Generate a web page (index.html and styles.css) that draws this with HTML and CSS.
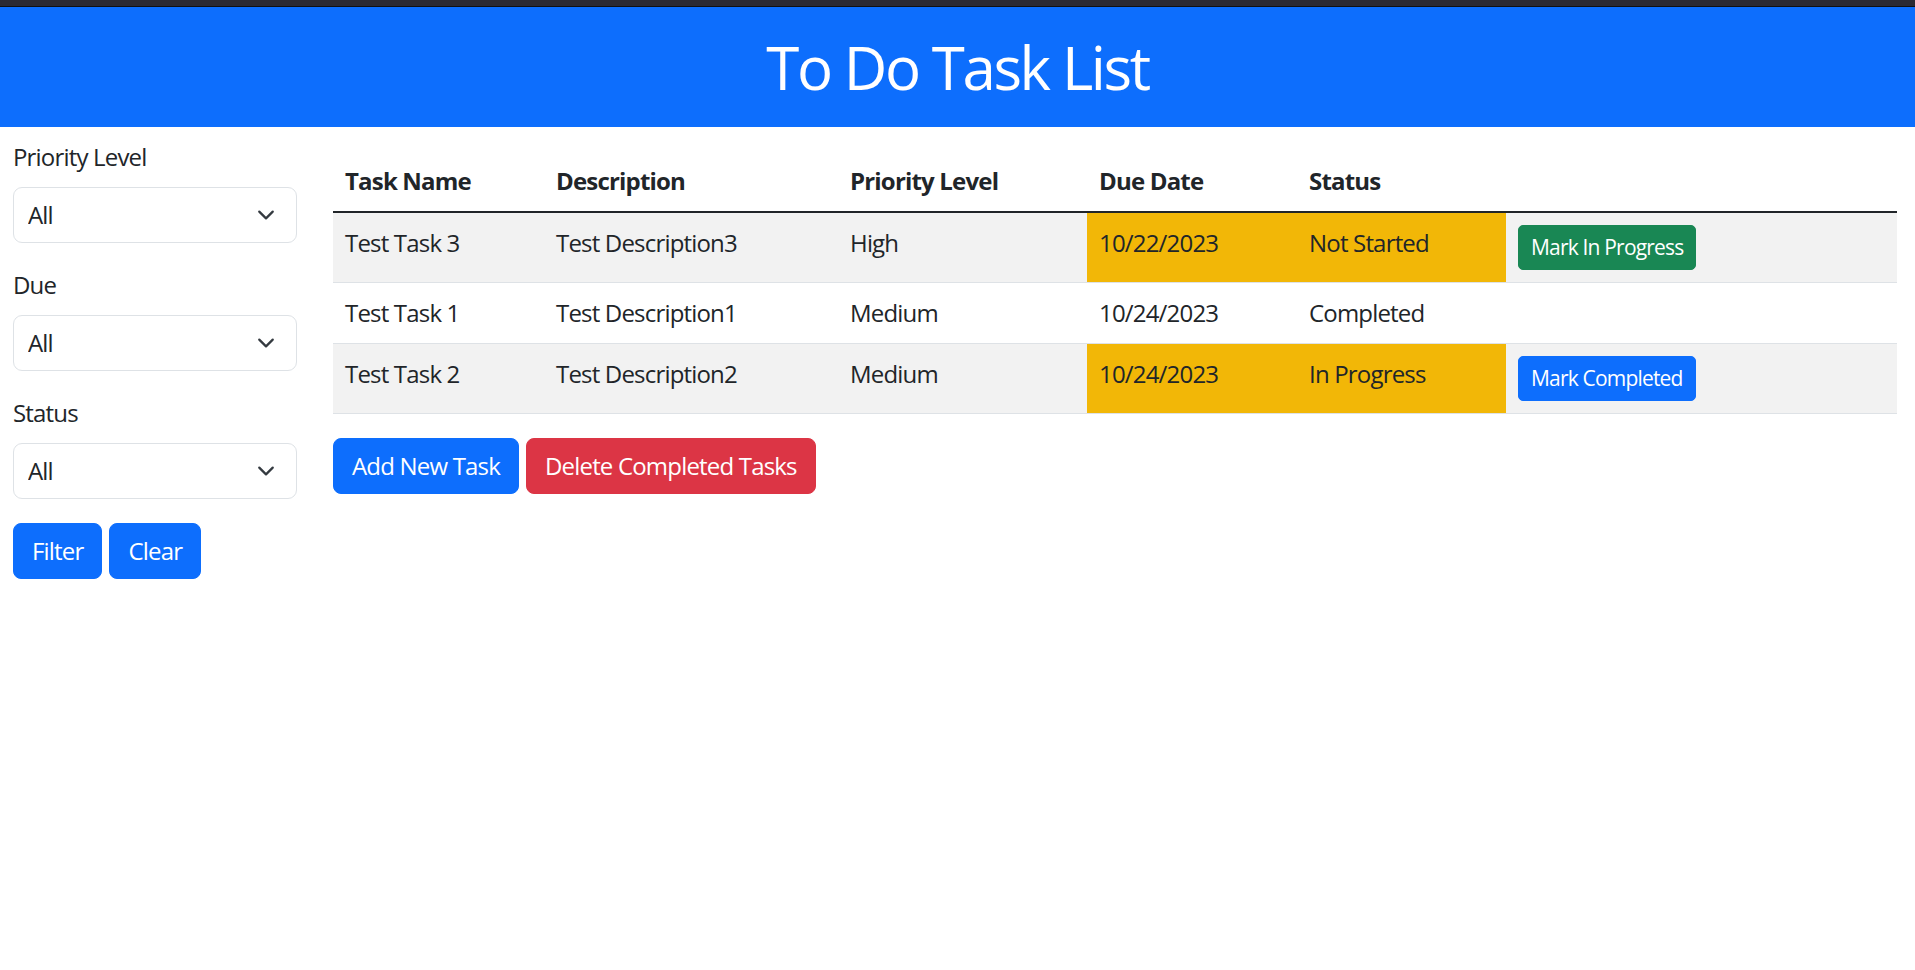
FILE: index.html
```html
<!DOCTYPE html>
<html lang="en">
<head>
<meta charset="utf-8">
<title>To Do Task List</title>
<link rel="stylesheet" href="styles.css">
</head>
<body>
<div class="chrome-strip"></div>
<header class="page-header">
  <h1 class="page-title">To Do Task List</h1>
</header>
<div class="layout">
  <aside class="sidebar">
    <div class="field">
      <label class="field-label" for="f-priority">Priority Level</label>
      <div class="select-wrap">
        <select id="f-priority" class="form-select"><option>All</option><option>High</option><option>Medium</option><option>Low</option></select>
        <svg class="chevron" viewBox="0 0 16 16" width="18" height="18" aria-hidden="true"><path d="m2 5 6 6 6-6" fill="none" stroke="#343a40" stroke-width="2" stroke-linecap="round" stroke-linejoin="round"/></svg>
      </div>
    </div>
    <div class="field">
      <label class="field-label" for="f-due">Due</label>
      <div class="select-wrap">
        <select id="f-due" class="form-select"><option>All</option><option>Overdue</option><option>Today</option></select>
        <svg class="chevron" viewBox="0 0 16 16" width="18" height="18" aria-hidden="true"><path d="m2 5 6 6 6-6" fill="none" stroke="#343a40" stroke-width="2" stroke-linecap="round" stroke-linejoin="round"/></svg>
      </div>
    </div>
    <div class="field">
      <label class="field-label" for="f-status">Status</label>
      <div class="select-wrap">
        <select id="f-status" class="form-select"><option>All</option><option>Not Started</option><option>In Progress</option><option>Completed</option></select>
        <svg class="chevron" viewBox="0 0 16 16" width="18" height="18" aria-hidden="true"><path d="m2 5 6 6 6-6" fill="none" stroke="#343a40" stroke-width="2" stroke-linecap="round" stroke-linejoin="round"/></svg>
      </div>
    </div>
    <div class="btn-row">
      <button class="btn btn-primary" type="button">Filter</button>
      <button class="btn btn-primary" type="button">Clear</button>
    </div>
  </aside>
  <main class="main">
    <table class="task-table">
      <colgroup>
        <col class="c-name"><col class="c-desc"><col class="c-prio"><col class="c-due"><col class="c-status"><col class="c-action">
      </colgroup>
      <thead>
        <tr><th>Task Name</th><th>Description</th><th>Priority Level</th><th>Due Date</th><th>Status</th><th></th></tr>
      </thead>
      <tbody>
        <tr class="striped">
          <td>Test Task 3</td><td>Test Description3</td><td>High</td>
          <td class="warn">10/22/2023</td><td class="warn">Not Started</td>
          <td><button class="btn btn-sm btn-success" type="button">Mark In Progress</button></td>
        </tr>
        <tr>
          <td>Test Task 1</td><td>Test Description1</td><td>Medium</td>
          <td>10/24/2023</td><td>Completed</td><td></td>
        </tr>
        <tr class="striped">
          <td>Test Task 2</td><td>Test Description2</td><td>Medium</td>
          <td class="warn">10/24/2023</td><td class="warn">In Progress</td>
          <td><button class="btn btn-sm btn-primary" type="button">Mark Completed</button></td>
        </tr>
      </tbody>
    </table>
    <div class="btn-row">
      <button class="btn btn-primary" type="button">Add New Task</button>
      <button class="btn btn-danger" type="button">Delete Completed Tasks</button>
    </div>
  </main>
</div>
</body>
</html>
```
FILE: styles.css
```css
* { box-sizing: border-box; }

html, body {
  margin: 0;
  padding: 0;
  background: #fff;
}

body {
  font-family: "Open Sans", "Noto Sans", "Liberation Sans", sans-serif;
  font-size: 24px;
  line-height: 36px;
  letter-spacing: -0.034em;
  color: #212529;
}

.chrome-strip {
  height: 7px;
  background: #2b2a33;
  border-bottom: 1px solid #111;
}

.page-header {
  background: #0d6efd;
  padding: 24px 0;
  text-align: center;
}

.page-title {
  margin: 0;
  font-size: 60px;
  line-height: 72px;
  font-weight: 400;
  letter-spacing: -0.04em;
  color: #fff;
}

.layout {
  display: flex;
  align-items: flex-start;
}

.sidebar {
  width: 297px;
  padding: 12px 0 0 13px;
  flex: none;
}

.field {
  margin-bottom: 24px;
}

.field-label {
  display: block;
  margin-bottom: 12px;
}

.select-wrap {
  position: relative;
}

.form-select {
  display: block;
  width: 100%;
  height: 56px;
  margin: 0;
  padding: 9px 54px 9px 14px;
  font: inherit;
  letter-spacing: inherit;
  color: #212529;
  background: #fff;
  border: 1px solid #dee2e6;
  border-radius: 9px;
  appearance: none;
  -webkit-appearance: none;
}

.chevron {
  position: absolute;
  right: 22px;
  top: 19px;
  pointer-events: none;
}

.btn-row {
  display: flex;
  gap: 7px;
}

.btn {
  display: inline-block;
  margin: 0;
  padding: 9px 18px;
  font: inherit;
  letter-spacing: inherit;
  line-height: 36px;
  color: #fff;
  border: 1px solid transparent;
  border-radius: 8px;
  cursor: pointer;
}

.btn-primary { background: #0d6efd; border-color: #0d6efd; }
.btn-success { background: #198754; border-color: #198754; }
.btn-danger { background: #dc3545; border-color: #dc3545; }

.btn-sm {
  padding: 6px 12px;
  font-size: 21px;
  line-height: 31px;
  border-radius: 5px;
}

.main {
  flex: 1;
  min-width: 0;
  padding: 24px 18px 0 36px;
}

.task-table {
  width: 100%;
  table-layout: fixed;
  border-collapse: collapse;
  margin-bottom: 24px;
}

.c-name { width: 211px; }
.c-desc { width: 294px; }
.c-prio { width: 249px; }
.c-due { width: 210px; }
.c-status { width: 209px; }

.task-table th,
.task-table td {
  padding: 12px;
  text-align: left;
  vertical-align: top;
  border-bottom: 1px solid #dee2e6;
}

.task-table th {
  font-weight: 700;
  border-bottom: 2px solid #212529;
}

.task-table tr.striped td {
  background: #f2f2f2;
}

.task-table tr.striped td.warn,
.task-table td.warn {
  background: #f2b707;
}
```
